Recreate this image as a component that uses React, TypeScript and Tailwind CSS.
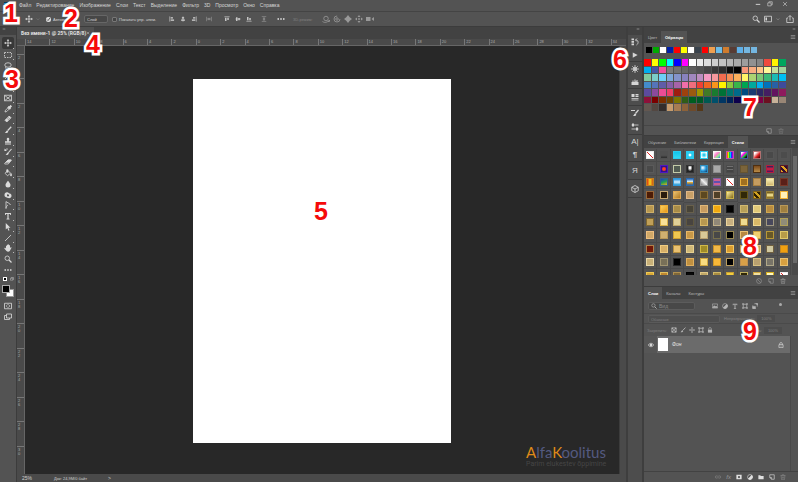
import type { ReactNode } from 'react'
import clsx from 'clsx'

const menuItems = ['Файл', 'Редактирование', 'Изображение', 'Слои', 'Текст', 'Выделение', 'Фильтр', '3D', 'Просмотр', 'Окно', 'Справка']

const recentSwatches = [
  '#000000', '#00a900', '#ffffff', '#001fa9', '#ff0000', '#ffff00', '#ffffff', '#39424c',
  '#ff0000', '#f0a050', '#6cbce8', '#cf7c2e', '#573c35', '#5fb0e8', '#74b6e0', '#74b6e0',
]

const swatches = [
  '#ff0000 #ffff00 #00ff00 #00ffff #0000ff #ff00ff #ffffff #ebebeb #dcdcdc #cfcfcf #c2c2c2 #b5b5b5 #a9a9a9 #9d9d9d #919191 #858585 #ee4a3e #fff200 #00a65d',
  '#00aeef #4557a6 #f0509c #7b7b7b #717171 #676767 #5d5d5d #515151 #454545 #393939 #2d2d2d #0c0c0c #000000 #f7977a #f9ad81 #fdc68a #fff79a #c4df9b #a2d39c',
  '#82ca9d #7bcdc8 #6ecff6 #7ea7d8 #8493ca #8882be #a187be #bc8dbf #f49ac2 #f6989d #f26c4f #f68e55 #fbaf5c #fff467 #acd372 #7cc576 #3bb878 #1abbb4 #00bff3',
  '#438cca #5574b9 #605ca8 #855fa8 #a763a8 #f06ea9 #f26d7d #ef4036 #f26522 #f7941d #fff200 #8dc73f #39b54a #00a651 #00a99d #00aeef #0072bc #2860a6 #3e4b9c',
  '#5c4b9e #8b4a9c #ec4c94 #ee3f66 #9e1c0f #a0410d #9c5a10 #a09600 #417a27 #1a7b30 #007236 #00746b #006a8a #004b80 #1b3a71 #2b2864 #441e62 #631460 #8e1a5d',
  '#8e1039 #790000 #7b2e00 #6d4400 #7a7400 #305c18 #005e20 #005826 #005952 #00506b #003663 #002157 #0d004c #32004b #4b0049 #7b0046 #6c1020 #c7b299 #998675',
  '#635750 #534741 #332e2c #c69c6d #a67c52 #8c6239 #6f4a2a #553818',
].join(' ').split(' ')

const NONE = 'linear-gradient(to top right,#fff 42%,#e02020 42%,#e02020 58%,#fff 58%)'

// fill and border of every style thumbnail, row by row
const styleThumbs: [string, string][] = [
  [NONE, '#eeeeee'], ['linear-gradient(#505050 55%,#2b2b2b)', '#505050'], ['linear-gradient(#10c4ec,#35d8f0)', '#28ccf0'], ['radial-gradient(#ffffff 15%,#28ccf0 45%)', '#28ccf0'], ['radial-gradient(#28ccf0 15%,#ffffff 75%)', '#28ccf0'], ['linear-gradient(135deg,#fff,#ff7dd0 40%,#8cf08c 70%,#4060ff)', '#f5f5f5'], ['linear-gradient(90deg,#f00,#ff0,#0c4,#0cf,#20f,#f0c)', '#c050b0'], ['linear-gradient(135deg,#fff 15%,#f0e 40%,#2c4 60%,#111 85%)', '#4060a0'], ['linear-gradient(135deg,#fff 20%,#e02020 60%,#300)', '#b07070'], ['#494949', '#565656'], ['#4c4c4c', '#545454'],
  ['#494949', '#5a5a5a'], ['radial-gradient(#ff4020 30%,#301090 60%)', '#5018c0'], ['#525c52', '#c4cba8'], ['radial-gradient(at 50% 30%,#fff 15%,#222 60%)', '#333333'], ['radial-gradient(at 30% 30%,#fff,#2a9ee0 50%,#103060)', '#3090c0'], ['#a8a8a8', '#8d8d8d'], ['repeating-linear-gradient(#707070 0 1px,#444 1px 3px)', '#4b4b4b'], ['#7b643a', '#665430'], ['linear-gradient(#7b4a1c,#b98c48)', '#503010'], ['linear-gradient(#202060,#e02040,#401060)', '#b02040'], ['repeating-linear-gradient(45deg,#e0a020 0 2px,#301030 2px 4px)', '#581828'],
  ['linear-gradient(90deg,#e03010,#f8d820,#d05010)', '#c08020'], ['linear-gradient(160deg,#2040c0,#20a050,#e0b020)', '#306090'], ['linear-gradient(#2090e0,#d8f0ff,#209ad8)', '#3098d8'], ['linear-gradient(#3070c0,#e0f0f0 45%,#e0a020 60%,#3060a0)', '#2868b0'], ['linear-gradient(45deg,#777,#eee,#888)', '#999999'], ['repeating-linear-gradient(#d06090 0 2px,#6050b0 2px 4px)', '#8060a0'], [NONE, '#eeeeee'], ['#a07020', '#e8b040'], ['#c49c60', '#a98040'], ['linear-gradient(#f8f0b8,#d0b870)', '#e8d890'], ['#5a2018', '#783828'],
  ['#4c1c06', '#9a6838'], ['#2a1c0e', '#c8a870'], ['linear-gradient(135deg,#e8c070,#b07820)', '#e0a850'], ['#c8a068', '#e0b888'], ['#5c4820', '#8c7038'], ['#504028', '#c0a080'], ['linear-gradient(135deg,#fff0a0,#806818)', '#c8b048'], ['#302808', '#685818'], ['repeating-linear-gradient(45deg,#d0a020 0 2px,#302000 2px 4px)', '#806018'], ['linear-gradient(#604808,#fff0a0,#806010)', '#988038'], ['#fff0b8', '#f0b030'],
  ['#b89850', '#d0b068'], ['linear-gradient(135deg,#f8d060,#e89818)', '#f0b038'], ['#a88c48', '#c8a860'], ['#484438', '#68604c'], ['#c89c60', '#e0b878'], ['#f0a810', '#f8c848'], ['#000000', '#181818'], ['#b8a058', '#d0b870'], ['#e0c878', '#f0dc98'], ['#b88c40', '#d0a850'], ['#a08040', '#b89858'],
]

const goldTones: [string, string][] = [
  ['#c0a058', '#806830'], ['#f8e098', '#d8b048'], ['#e0d098', '#c0a868'], ['#484440', '#605840'],
  ['#b89850', '#d8b868'], ['#908878', '#c0b088'], ['#c8b080', '#ead49c'], ['#f0dc90', '#a88438'],
  ['#d8b868', '#f0d890'], ['#48485c', '#a09880'], ['#908c78', '#b0a058'], ['#d0a868', '#f0c080'],
  ['#d0b070', '#b89858'], ['#f0c850', '#d0a030'], ['#c89848', '#e8b868'], ['#d8c898', '#b8a070'],
  ['#484848', '#78704c'], ['#000000', '#988850'], ['#b88840', '#e8c070'], ['#f0d070', '#c8a040'],
  ['#685828', '#b89838'], ['#b89c48', '#e0c868'], ['#701808', '#b08048'], ['#d8b068', '#f0cc80'],
  ['#e8c070', '#b89040'], ['#d0b878', '#e8d090'], ['#a08c28', '#d0b848'], ['#f0b848', '#c89028'],
  ['#d89c30', '#f8c860'], ['#f0d890', '#c0a050'], ['#c0a060', '#e8c888'], ['#d0c8a0', '#706040'],
  ['#f0a010', '#c88820'], ['#c8b078', '#e8d8a8'], ['#787058', '#a09470'], ['#000000', '#282828'],
  ['#c09040', '#e0b060'], ['#f8dc80', '#d0a840'], ['#f8b838', '#d09828'], ['#000000', '#b89c60'],
  ['#d8a048', '#c09050'], ['#b8a070', '#d8c080'], ['#787468', '#b0a888'], ['#d8a040', '#e8c070'],
  ['#d8a838', '#f0c850'], ['#c08830', '#e0c060'], ['#806838', '#b09050'], ['#080808', '#000000'],
  ['#c0a868', '#e0c888'], ['#a88c40', '#d0b868'], ['#f0cc40', '#c8a030'], ['#302808', '#c0b060'],
  ['#f0e0a0', '#d0a840'], ['#fff8c0', '#d8b020'], [NONE, '#eeeeee'],
]

type IconProps = { name: keyof typeof shapes; className?: string }

// line drawings on a 16 unit grid
const shapes = {
  move: <><path d="M8 2v12M2 8h12" /><path d="M8 0 5.5 3.5h5zM8 16l-2.5-3.5h5zM0 8l3.5-2.5v5zM16 8l-3.5-2.5v5z" fill="currentColor" stroke="none" /></>,
  marquee: <path d="M1 3h14v10H1z" strokeDasharray="3 2" />,
  lasso: <><ellipse cx="8" cy="6" rx="6.5" ry="4.5" /><path d="M4 9.5c-2 2 1 3 0 5.500" /></>,
  wand: <><path d="M2 14l8-8" /><path d="M12 1v3M12 7v2M9 4h1M14 4h1.500" /></>,
  crop: <path d="M4 0v12h12M0 4h12v12" />,
  frame: <path d="M1 2.500h14v11H1zM1 2.500l14 11M15 2.500l-14 11" />,
  dropper: <><path d="M2 14l1-3.500 5-5 2.500 2.500-5 5z" /><path d="M7.500 4.500 9 3l1 1 2-2.500c2-1 3.500.5 2.500 2.500L12 6l1 1-1.500 1.500z" fill="currentColor" /></>,
  heal: <><path d="M2 10.500 10.500 2 14 5.500 5.500 14z" fill="currentColor" /><path d="M6 6.500l3.500 3.500M8 4.500l3.500 3.500" stroke="#535353" strokeWidth="1" /></>,
  brush: <><path d="M14.500 1.500 7.500 9" strokeWidth="2.400" /><path d="M7 9c-3-.5-2.500 3.500-5.500 5 3.500.8 7-.5 7-3.500z" fill="currentColor" stroke="none" /></>,
  stamp: <path d="M5.500 4a2.500 2.500 0 0 1 5 0c0 2-1 2.500-1 4.500H14v3H2v-3h4.500c0-2-1-2.500-1-4.500zM2 13h12v2H2z" fill="currentColor" stroke="none" />,
  historyBrush: <><path d="M15 2 8.500 9.500" strokeWidth="2.200" /><path d="M8 9c-3 0-2 3-5 5 3.500.5 6.500-.5 6.500-3.500zM1 1v5h5z" fill="currentColor" stroke="none" /><path d="M2 5c2-4 5-3.500 6-2" /></>,
  eraser: <><path d="M1.500 10.500 8 4h6.500L8.500 12h-7z" /><path d="M8 4h6.500L11 8.500H4z" fill="currentColor" /></>,
  bucket: <><path d="M2 8.500 8 3l5 5.500-6 5z" /><path d="M5.500 7V1.500H8V7M14 9c2 3 1.500 5 0 5s-1.500-2 0-5z" fill="currentColor" /></>,
  drop: <path d="M8 1.500c3 4 5 6 5 8.500a5 5 0 0 1-10 0c0-2.500 2-4.500 5-8.500z" fill="currentColor" stroke="none" />,
  dodge: <path d="M1 8c0-4 3-6 7-5l3 2c3 0 4 2 4 5s-3 5-7 4l-5-2C1.500 11 1 10 1 8zm5-1.500v4h4v-3z" fill="currentColor" stroke="none" fillRule="evenodd" />,
  pen: <path d="M4 1c1 2 8 3 9 7M4 1v14c0-3 2-6 4-7" />,
  type: <path d="M2 2h12v4h-1.500l-.5-2H9.200v9l1.800.5V15H5v-1.500l1.800-.5V4H4l-.5 2H2z" fill="currentColor" stroke="none" />,
  arrow: <path d="M3.500 0v13l3.200-3 2.300 5.500 2-1-2.300-5H13z" fill="currentColor" stroke="none" />,
  line: <path d="M2 14 14 2" />,
  hand: <path d="M4 9V4c0-1.500 2-1.500 2 0V2c0-1.600 2-1.600 2 0V1.500c0-1.500 2-1.500 2 0V3c0-1.500 2-1.500 2 0v5l1.500-1.500c1.500-.5 2 1 1 2L11.500 14c-2 2-5 1.500-6.500 0L1 9.500C0 8 2 7 3 8z" fill="currentColor" stroke="none" />,
  search: <><circle cx="6.500" cy="6.500" r="4.500" /><path d="M10 10l5 5" strokeWidth="2.400" /></>,
  dots: <path d="M1 6.500h3v3H1zM6.500 6.500h3v3h-3zM12 6.500h3v3h-3z" fill="currentColor" stroke="none" />,
  mask: <><path d="M1 2.500h14v11H1z" /><circle cx="8" cy="8" r="3" strokeDasharray="2 1" /></>,
  screen: <><path d="M5 2h10v8H5z" /><path d="M5 5H1v8h10v-3" /></>,
  alignLeft: <><path d="M2 1v14" /><path d="M4.500 3h6v3.500h-6zM4.500 9h9v3.500h-9z" fill="currentColor" stroke="none" /></>,
  alignCenter: <><path d="M8 1v14" /><path d="M5 3h6v3.500H5zM3 9h10v3.500H3z" fill="currentColor" stroke="none" /></>,
  alignRight: <><path d="M14 1v14" /><path d="M5.500 3h6v3.500h-6zM2.500 9h9v3.500h-9z" fill="currentColor" stroke="none" /></>,
  spread: <><path d="M1.500 2v12M14.500 2v12" /><path d="M4 5h8v6H4z" fill="currentColor" stroke="none" opacity=".7" /></>,
  alignTop: <><path d="M1 2h14" /><path d="M3 4.500h3.500v9H3zM9 4.500h3.500v6H9z" fill="currentColor" stroke="none" /></>,
  alignMiddle: <><path d="M1 8h14" /><path d="M3 3h3.500v10H3zM9 5h3.500v6H9z" fill="currentColor" stroke="none" /></>,
  alignBottom: <><path d="M1 14h14" /><path d="M3 2.500h3.500v9H3zM9 5.500h3.500v6H9z" fill="currentColor" stroke="none" /></>,
  spreadV: <><path d="M2 1.500h12M2 14.500h12" /><path d="M5 4h6v8H5z" fill="currentColor" stroke="none" opacity=".7" /></>,
  orbit: <><circle cx="8" cy="7" r="4.500" /><path d="M1 13c4 3 10 2 14-3M12 13h3v-3" /></>,
  roll: <><circle cx="8" cy="8" r="6" strokeDasharray="28 9" /><circle cx="8" cy="8" r="2.500" /></>,
  pan: <path d="M8 0l3.500 4.500L16 8l-4.500 3.500L8 16l-3.500-4.500L0 8l4.500-3.500z" fill="currentColor" stroke="none" />,
  slide: <><path d="M8 0l3 4H5zM8 16l3-4H5zM0 8l4-3v6zM16 8l-4-3v6z" fill="currentColor" stroke="none" /><circle cx="8" cy="8" r="1.500" /></>,
  camera: <path d="M0 4h9v8H0zM11 8l5-4v8z" fill="currentColor" stroke="none" />,
  workspace: <><path d="M1 2.500h14v11H1z" /><path d="M3 5h3v6H3z" fill="currentColor" stroke="none" /></>,
  share: <path d="M4 6H1.500v9h13V6H12M8 11V1.500M4.500 4.500 8 1l3.500 3.500" />,
  history: <><path d="M1 1h5v3.500H1zM1 6h5v3.500H1zM1 11h5v3.500H1z" fill="currentColor" stroke="none" /><path d="M9 4c6-1 7 7 2 10M12 1 9 4l3 3" /></>,
  play: <path d="M2 1v14l13-7z" fill="currentColor" stroke="none" />,
  wheel: <><circle cx="8" cy="8" r="3.500" /><path d="M8 0v16M0 8h16M2.500 2.500l11 11M13.500 2.500l-11 11" /></>,
  bars: <path d="M1 14V8h2V5h2v3h2V3h2v4h2V4h2v4h2v6z" fill="currentColor" stroke="none" />,
  source: <><path d="M1 2h6v6H1zM9 2h6v3H9zM9 6h6v2H9z" fill="currentColor" stroke="none" /><path d="M1 11h14M1 14h14" /></>,
  brushSettings: <><path d="M15 2 9 9" strokeWidth="2.400" /><path d="M9 9c-3-.5-2.500 3-5 5 3 .5 6.500 0 6.500-3zM0 2h8v2H0z" fill="currentColor" stroke="none" /></>,
  sliders: <><path d="M1 4h14M1 12h14" /><path d="M2 1h4v6H2zM10 9h4v6h-4z" fill="currentColor" stroke="none" /></>,
  cube: <><path d="M8 1l6.500 3.500v7L8 15l-6.500-3.500v-7z" /><path d="M8 8v7M8 8 1.500 4.500M8 8l6.500-3.500" /></>,
  page: <path d="M2 2h12v12H7L2 9.500zM2 9.500h5V14" />,
  trash: <path d="M1.500 4h13M5.500 4V2h5v2M3 4l1 11h8l1-11M6.500 7v5M9.500 7v5" />,
  ban: <><circle cx="8" cy="8" r="6.500" /><path d="M3.500 3.500l9 9" /></>,
  image: <><path d="M1 2.500h14v11H1z" /><path d="M2 12l4-5 3 3 2-2 3 4z" fill="currentColor" /></>,
  adjust: <><circle cx="8" cy="8" r="6.500" /><path d="M12.600 3.400A6.500 6.500 0 0 1 3.400 12.600z" fill="currentColor" /></>,
  shape: <path d="M3.500 3.500h9v9h-9zM1 1h4v4H1zM11 1h4v4h-4zM1 11h4v4H1zM11 11h4v4h-4z" />,
  smart: <><path d="M6 2h8v8M10 14H2V6" /><path d="M2 9h7v6H2zM10 1h5v5z" fill="currentColor" /></>,
  checker: <><path d="M2 2h12v12H2z" /><path d="M2 2h4v4H2zM10 2h4v4h-4zM6 6h4v4H6zM2 10h4v4H2zM10 10h4v4h-4z" fill="currentColor" stroke="none" /></>,
  lock: <><path d="M4.500 7V4.500c0-4 7-4 7 0V7" /><path d="M2.500 7h11v8h-11z" fill="currentColor" stroke="none" /></>,
  lockOutline: <path d="M4.500 7V4.500c0-4 7-4 7 0V7M2.500 7h11v8h-11zM8 10v2" />,
  eye: <><path d="M0.500 8c4-6 11-6 15 0-4 6-11 6-15 0z" /><circle cx="8" cy="8" r="2.800" fill="currentColor" /></>,
  link: <path d="M6.500 5H4a3 3 0 0 0 0 6h2.500M9.500 5H12a3 3 0 0 1 0 6H9.500M5 8h6" />,
  maskFilled: <path d="M1 2h14v12H1zM8 5a3 3 0 1 0 0 6 3 3 0 0 0 0-6z" fill="currentColor" fillRule="evenodd" stroke="none" />,
  folder: <path d="M1 3h5l1.500 2H15v9H1z" fill="currentColor" stroke="none" />,
  caret: <path d="M3 6l5 5 5-5" />,
  minimize: <path d="M2 9h12" strokeWidth="2.500" />,
  restore: <path d="M5 5V2h9v8h-3M2 5h9v8H2z" />,
  close: <path d="M3 3l10 10M13 3 3 13" />,
  collapse: <path d="M7 4 3 8l4 4M13 4 9 8l4 4" />,
  menu: <path d="M2 4h12M2 8h12M2 12h12" />,
}

function Icon({ name, className }: IconProps) {
  return (
    <svg viewBox="0 0 16 16" fill="none" stroke="currentColor" strokeWidth="1.6" aria-hidden="true" className={clsx('shrink-0', className ?? 'size-2')}>
      {shapes[name]}
    </svg>
  )
}

function IconButton({ name, label, className, iconClass }: { name: keyof typeof shapes; label: string; className?: string; iconClass?: string }) {
  return (
    <button aria-label={label} className={clsx('flex shrink-0 items-center justify-center', className)}>
      <Icon name={name} className={iconClass} />
    </button>
  )
}

// Numbered callout that lies over the window
function Marker({ children, className }: { children: ReactNode; className: string }) {
  return (
    <span className={clsx('pointer-events-none absolute z-10 text-[25px] leading-6 font-bold text-[#f50a0a] [-webkit-text-stroke:5px_white] [paint-order:stroke_fill]', className)}>
      {children}
    </span>
  )
}

function MenuBar() {
  return (
    <header className="flex h-3 items-center border-b border-[#444] pr-2 pl-1">
      <span className="mr-2.5 w-[5px] bg-[#0e3a52] text-center text-[5px] leading-[7px] font-bold text-[#35a8dc]">Ps</span>
      <nav className="flex items-center gap-[5px]">
        {menuItems.map((item) => (
          <button key={item} className="text-[#d5d5d5]">{item}</button>
        ))}
      </nav>
      <div className="ml-auto flex items-center pb-1 text-[#d5d5d5]">
        <IconButton name="minimize" label="Свернуть" className="w-3" iconClass="size-1.5" />
        <IconButton name="restore" label="Восстановить" className="mr-1 w-3" iconClass="size-1.5" />
        <IconButton name="close" label="Закрыть" className="w-2.5" iconClass="size-1.5" />
      </div>
    </header>
  )
}

function OptionsBar() {
  return (
    <div className="flex h-[15px] items-center border-b border-[#3c3c3c] pr-1 pl-[25px] text-[4px] text-[#d5d5d5]">
      <IconButton name="move" label="Перемещение" />
      <Icon name="caret" className="mr-1.5 ml-[3px] size-1 text-[#999]" />
      <label className="flex w-[38px] items-center gap-0.5">
        <input type="checkbox" defaultChecked className="size-[5px] shrink-0 accent-[#dddddd]" />
        Автовыбор:
      </label>
      <select aria-label="Автовыбор" className="mr-1 h-2 w-6 appearance-none rounded-xs border border-[#666] bg-[#474747] pl-0.5">
        <option>Слой</option>
      </select>
      <label className="mr-2.5 flex w-[47px] items-center gap-0.5 whitespace-nowrap">
        <input type="checkbox" className="size-[5px] shrink-0 appearance-none rounded-[1px] border border-[#777] bg-[#444]" />
        Показать упр. элем.
      </label>
      <div className="flex items-center gap-[5px]">
        <IconButton name="alignLeft" label="По левому краю" iconClass="size-1.5" />
        <IconButton name="alignCenter" label="По центру" iconClass="size-1.5" />
        <IconButton name="alignRight" label="По правому краю" iconClass="size-1.5" />
        <IconButton name="spread" label="Распределить по ширине" className="ml-1 text-[#999]" iconClass="size-1.5" />
      </div>
      <div className="ml-3 flex items-center gap-[5px]">
        <IconButton name="alignTop" label="По верхнему краю" iconClass="size-1.5" />
        <IconButton name="alignMiddle" label="По середине" iconClass="size-1.5" />
        <IconButton name="alignBottom" label="По нижнему краю" iconClass="size-1.5" />
        <IconButton name="spreadV" label="Распределить по высоте" className="ml-1 text-[#999]" iconClass="size-1.5" />
      </div>
      <IconButton name="dots" label="Ещё" className="mr-2 ml-2.5 text-[#e5e5e5]" />
      <span className="w-[29px] text-[#808080]">3D-режим:</span>
      <div className="flex items-center gap-[3px] text-[#999]">
        <IconButton name="orbit" label="Вращать" />
        <IconButton name="roll" label="Крутить" />
        <IconButton name="pan" label="Перетащить" />
        <IconButton name="slide" label="Сдвинуть" />
        <IconButton name="camera" label="Камера" />
      </div>
      <div className="ml-auto flex items-center gap-1 text-[#d5d5d5]">
        <IconButton name="search" label="Поиск" />
        <IconButton name="workspace" label="Рабочая среда" />
        <Icon name="caret" className="mr-0.5 size-1" />
        <IconButton name="share" label="Поделиться" />
      </div>
    </div>
  )
}

const tools: [keyof typeof shapes, string][] = [
  ['move', 'Перемещение'], ['marquee', 'Прямоугольная область'], ['lasso', 'Лассо'], ['wand', 'Быстрое выделение'],
  ['crop', 'Рамка'], ['frame', 'Кадр'], ['dropper', 'Пипетка'], ['heal', 'Восстанавливающая кисть'], ['brush', 'Кисть'],
  ['stamp', 'Штамп'], ['historyBrush', 'Архивная кисть'], ['eraser', 'Ластик'], ['bucket', 'Заливка'], ['drop', 'Размытие'],
  ['dodge', 'Губка'], ['pen', 'Перо'], ['type', 'Текст'], ['arrow', 'Выделение контура'], ['line', 'Линия'],
  ['hand', 'Рука'], ['search', 'Масштаб'], ['dots', 'Изменить панель'],
]

function ToolBar() {
  return (
    <aside className="relative flex w-[17px] shrink-0 flex-col border-r border-[#3c3c3c] text-[#dadada]">
      <div className="mb-0.5 flex h-2 shrink-0 items-start bg-[#424242] pl-0.5 text-[#bbb]">
        <Icon name="collapse" className="size-1 rotate-180" />
      </div>
      <div className="flex h-[238px] shrink-0 flex-col items-center justify-between">
        {tools.map(([name, label], i) => (
          <button key={name} aria-label={label} className={clsx('relative flex w-3 items-center justify-center', i === 0 ? 'h-3 rounded-xs bg-[#383838]' : 'h-[10px]')}>
            <Icon name={name} />
            {name !== 'dots' && name !== 'search' && <span className="absolute right-0 bottom-0 size-px bg-[#bbb]" />}
          </button>
        ))}
      </div>
      <div className="mt-0.5 flex justify-center gap-[3px]">
        <span className="size-1 border border-white bg-black" />
        <Icon name="restore" className="size-1" />
      </div>
      <div className="relative mx-auto mt-1 h-3 w-3">
        <button aria-label="Цвет фона" className="absolute right-0 bottom-0 size-2 border border-[#999] bg-white" />
        <button aria-label="Основной цвет" className="absolute top-0 left-0 size-2 border border-[#aaa] bg-black" />
      </div>
      <IconButton name="mask" label="Быстрая маска" className="mt-[3px] h-[11px]" />
      <IconButton name="screen" label="Режим экрана" className="h-[11px]" />
      <Marker className="top-10 left-[5px]">3</Marker>
    </aside>
  )
}

const columns = [14, 12, 10, 8, 6, 4, 2, 0, 2, 4, 6, 8, 10, 12, 14, 16, 18, 20, 22, 24, 26, 28, 30, 32, 34]
const rows = [2, 0, 2, 4, 6, 8, 10, 12, 14, 16, 18, 20, 22, 24, 26, 28, 30]

function Document() {
  return (
    <main className="flex min-w-0 flex-1 flex-col">
      <div className="flex h-3 shrink-0 items-stretch bg-[#424242]">
        <div className="relative flex w-[77px] items-center bg-[#505050] pl-1 font-['Roboto',sans-serif] font-bold whitespace-nowrap text-[#e0e0e0]">
          Без имени-1 @ 25% (RGB/8)
          <button aria-label="Закрыть вкладку" className="ml-auto pr-1"><Icon name="close" className="size-1" /></button>
          <Marker className="top-[5px] right-[-6px] font-['Liberation_Sans',sans-serif]">4</Marker>
        </div>
      </div>
      <div className="flex h-[7px] shrink-0 overflow-hidden border-b border-[#666] bg-[#4a4a4a] pl-2 text-[4px] leading-[6px] text-[#aaa]">
        <div className="grid w-[610px] shrink-0 grid-cols-25">
          {columns.map((n, i) => (
            <span key={i} className="border-l border-[#777] pl-px">{n}</span>
          ))}
        </div>
      </div>
      <div className="flex min-h-0 flex-1">
        <div className="flex w-2 shrink-0 flex-col overflow-hidden border-r border-[#666] bg-[#4a4a4a] pt-2 text-[4px] leading-1 text-[#aaa]">
          <div className="grid h-[416px] shrink-0 auto-rows-fr">
            {rows.map((n, i) => (
              <span key={i} className="flex flex-col border-t border-[#777] pt-px pl-px">
                {String(n).split('').map((d, k) => <span key={k}>{d}</span>)}
              </span>
            ))}
          </div>
        </div>
        <section className="relative flex min-w-0 flex-1 items-center justify-center bg-[#282828] pt-px">
          <div className="relative h-[364px] w-[258px] bg-white">
            <Marker className="top-[120px] left-[121px]">5</Marker>
          </div>
          <div className="absolute right-3 bottom-1.5 w-[81px] whitespace-nowrap">
            <p className="font-['Lato',sans-serif] text-[15px] leading-[18px] text-[#545a80]">
              <span className="text-[#df8a18]">A</span>lfa<span className="text-[#df8a18]">K</span>oolitus
            </p>
            <p className="font-['Roboto',sans-serif] text-[7px] leading-[7px] text-[#464646]">Parim elukestev õppimine</p>
          </div>
        </section>
        <div className="w-[7px] shrink-0 border-l border-[#3c3c3c] bg-[#4a4a4a]" />
      </div>
      <footer className="flex h-2 shrink-0 items-center bg-[#4a4a4a] pl-[5px] text-[#cfcfcf]">
        <span className="w-8">25%</span>
        <span className="w-[54px] text-[4px]">Док: 24,9M/0 байт</span>
        <span>&gt;</span>
      </footer>
    </main>
  )
}

function IconStrip() {
  return (
    <aside className="flex w-[18px] shrink-0 flex-col border-x-2 border-[#3e3e3e] bg-[#4d4d4d] text-[#d5d5d5]">
      <div className="flex h-2 shrink-0 justify-end bg-[#424242] pr-0.5 text-[#bbb]"><Icon name="collapse" className="size-1" /></div>
      <div className="relative flex h-[27px] flex-col items-center justify-around border-b border-[#3c3c3c]">
        <IconButton name="history" label="История" />
        <IconButton name="play" label="Операции" iconClass="size-1.5" />
        <Marker className="top-3 left-[-15px]">6</Marker>
      </div>
      <div className="flex h-[27px] flex-col items-center justify-around border-b border-[#3c3c3c]">
        <IconButton name="wheel" label="Цветовой круг" />
        <IconButton name="bars" label="Гистограмма" />
      </div>
      <div className="flex h-[17px] flex-col items-center justify-center border-b border-[#3c3c3c]">
        <IconButton name="source" label="Источник клонов" />
      </div>
      <div className="flex h-[29px] flex-col items-center justify-around border-b border-[#3c3c3c]">
        <IconButton name="brushSettings" label="Настройки кисти" />
        <IconButton name="sliders" label="Наборы параметров" />
      </div>
      <div className="flex h-[27px] flex-col items-center justify-around border-b border-[#3c3c3c] text-[8px] leading-[10px]">
        <button aria-label="Символ">A|</button>
        <button aria-label="Абзац" className="font-bold">¶</button>
      </div>
      <button aria-label="Глифы" className="h-[18px] border-b border-[#3c3c3c] text-[8px] leading-[10px]">Я</button>
      <div className="flex h-[18px] items-center justify-center border-b border-[#3c3c3c]">
        <IconButton name="cube" label="3D" />
      </div>
    </aside>
  )
}

function PanelTabs({ tabs, active }: { tabs: string[]; active: string }) {
  return (
    <div role="tablist" className="flex h-3 shrink-0 items-stretch bg-[#424242] text-[4px]">
      {tabs.map((tab) => (
        <button key={tab} role="tab" aria-selected={tab === active} className={clsx('px-1', tab === active ? 'bg-[#535353] font-bold text-white' : 'text-[#bbbbbb]')}>
          {tab}
        </button>
      ))}
      <IconButton name="menu" label="Меню панели" className="mr-0.5 ml-auto text-[#aaa]" iconClass="size-1.5" />
    </div>
  )
}

function SwatchesPanel() {
  return (
    <section className="relative flex h-[105px] shrink-0 flex-col border-b border-[#3c3c3c]">
      <PanelTabs tabs={['Цвет', 'Образцы']} active="Образцы" />
      <div className="flex gap-px px-0.5 pt-1 pb-1.5">
        {recentSwatches.map((c, i) => (
          <button key={i} aria-label={c} className="size-1.5" style={{ backgroundColor: c }} />
        ))}
      </div>
      <div className="w-[142px] flex-1">
        <div className="grid grid-cols-19 gap-px">
          {swatches.map((c, i) => (
            <button key={i} aria-label={c} className="aspect-square" style={{ backgroundColor: c }} />
          ))}
        </div>
      </div>
      <div className="flex h-2.5 items-center justify-end gap-1 border-t border-[#464646] pr-3.5 text-[#aaa]">
        <IconButton name="page" label="Новый образец" iconClass="size-1.5" />
        <IconButton name="trash" label="Удалить образец" className="ml-0.5 text-[#777]" iconClass="size-1.5" />
      </div>
      <Marker className="top-16 right-[41px]">7</Marker>
    </section>
  )
}

function StylesPanel() {
  return (
    <section className="relative flex h-[151px] shrink-0 flex-col border-b border-[#3c3c3c]">
      <PanelTabs tabs={['Обучение', 'Библиотеки', 'Коррекция', 'Стили']} active="Стили" />
      <div className="flex h-[127px]">
        <div className="w-[147px] overflow-hidden pt-px">
          <div className="grid grid-cols-11">
            {[...styleThumbs, ...goldTones].map(([fill, edge], i) => (
              <button key={i} aria-label={`Стиль ${i + 1}`} className="flex aspect-square items-center justify-center border-r border-b border-[#494949]">
                <span className="size-2 border" style={{ background: fill, borderColor: edge }} />
              </button>
            ))}
          </div>
        </div>
        <div className="ml-auto w-1.5 bg-[#4a4a4a] px-px pt-2">
          <div className="h-[107px] bg-[#6a6a6a]" />
        </div>
      </div>
      <div className="flex flex-1 items-center justify-end gap-1.5 pr-3 text-[#999]">
        <IconButton name="ban" label="Очистить стиль" iconClass="size-1.5" />
        <IconButton name="page" label="Новый стиль" iconClass="size-1.5" />
        <IconButton name="trash" label="Удалить стиль" iconClass="size-1.5" />
      </div>
      <Marker className="top-[98px] right-[41px]">8</Marker>
    </section>
  )
}

function LayersPanel() {
  return (
    <section className="relative flex min-h-0 flex-1 flex-col">
      <PanelTabs tabs={['Слои', 'Каналы', 'Контуры']} active="Слои" />
      <div className="flex h-[15px] items-center border-b border-[#4a4a4a] px-1 text-[#b5b5b5]">
        <label className="flex h-2 w-[47px] items-center gap-0.5 rounded-xs border border-[#5c5c5c] bg-[#484848] px-0.5">
          <Icon name="search" className="size-1.5" />
          <input aria-label="Вид" placeholder="Вид" className="w-full min-w-0 placeholder:text-[#888]" />
        </label>
        <div className="ml-[17px] flex gap-1">
          <IconButton name="image" label="Пиксели" iconClass="size-1.5" />
          <IconButton name="adjust" label="Коррекция" iconClass="size-1.5" />
          <IconButton name="type" label="Текст" iconClass="size-1.5" />
          <IconButton name="shape" label="Фигура" iconClass="size-1.5" />
          <IconButton name="smart" label="Смарт-объект" iconClass="size-1.5" />
        </div>
        <button aria-label="Фильтр слоёв" className="mr-3 mb-1 ml-auto size-[3px] rounded-full bg-[#aaa]" />
      </div>
      <div className="flex h-2.5 items-center border-b border-[#4a4a4a] pl-1 text-[4px] text-[#808080]">
        <select aria-label="Режим наложения" className="h-2 w-[72px] appearance-none rounded-xs border border-[#5a5a5a] bg-[#4e4e4e] pl-0.5">
          <option>Обычные</option>
        </select>
        <label className="flex items-center gap-0.5 pl-1">
          Непрозрачность:
          <input defaultValue="100%" className="w-[18px] bg-[#4c4c4c] text-center" />
        </label>
      </div>
      <div className="flex h-3 items-center pl-[3px] text-[4px] text-[#808080]">
        <span className="w-6">Закрепить:</span>
        <div className="flex gap-[3px] text-[#b5b5b5]">
          <IconButton name="checker" label="Прозрачные пиксели" iconClass="size-1.5" />
          <IconButton name="brush" label="Пиксели изображения" iconClass="size-1.5" />
          <IconButton name="move" label="Положение" iconClass="size-1.5" />
          <IconButton name="shape" label="Вложенность" iconClass="size-1.5" />
          <IconButton name="lock" label="Все параметры" iconClass="size-1.5" />
        </div>
        <label className="ml-auto flex items-center gap-0.5 pr-4">
          Заливка:
          <input defaultValue="100%" className="w-[18px] bg-[#4c4c4c] text-center" />
        </label>
      </div>
      <div className="flex min-h-0 flex-1">
        <div className="flex-1">
          <div className="flex h-[17px] items-center bg-[#6b6b6b] pr-1.5 text-[#e5e5e5]">
            <IconButton name="eye" label="Видимость слоя" className="h-full w-[13px] bg-[#565656]" iconClass="size-1.5" />
            <span className="mr-1 ml-px h-[13px] w-2.5 bg-white" />
            <em>Фон</em>
            <Icon name="lockOutline" className="ml-auto size-1.5" />
          </div>
        </div>
        <div className="w-2 border-l border-[#494949]" />
      </div>
      <div className="flex h-[11px] items-center justify-end gap-[5px] border-t border-[#424242] pr-3 text-[#e0e0e0]">
        <IconButton name="link" label="Связать слои" className="text-[#888]" iconClass="size-1.5" />
        <button aria-label="Стиль слоя" className="text-[6px] text-[#999] italic">fx</button>
        <IconButton name="maskFilled" label="Добавить маску" iconClass="size-1.5" />
        <IconButton name="adjust" label="Корректирующий слой" iconClass="size-1.5" />
        <IconButton name="folder" label="Новая группа" iconClass="size-1.5" />
        <IconButton name="page" label="Новый слой" iconClass="size-1.5" />
        <IconButton name="trash" label="Удалить слой" className="text-[#888]" iconClass="size-1.5" />
      </div>
      <Marker className="top-8 right-[41px]">9</Marker>
    </section>
  )
}

export default function App() {
  return (
    <div className="relative flex h-screen flex-col overflow-hidden bg-[#535353] font-['Liberation_Sans',Arial,sans-serif] text-[5px] leading-[7px]">
      <MenuBar />
      <OptionsBar />
      <div className="flex min-h-0 flex-1">
        <ToolBar />
        <Document />
        <IconStrip />
        <div className="flex w-[154px] shrink-0 flex-col">
          <div className="flex h-1 shrink-0 justify-end bg-[#424242] pr-0.5 text-[#bbb]"><Icon name="collapse" className="size-1 rotate-180" /></div>
          <SwatchesPanel />
          <StylesPanel />
          <LayersPanel />
        </div>
      </div>
      <Marker className="top-px left-1">1</Marker>
      <Marker className="top-1.5 left-16">2</Marker>
    </div>
  )
}
